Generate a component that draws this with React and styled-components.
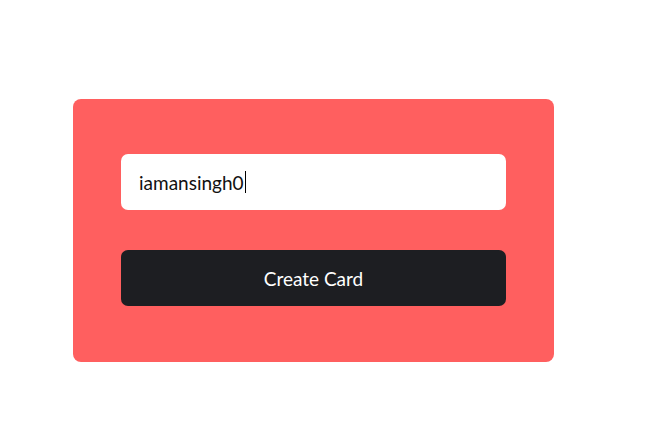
import styled, { createGlobalStyle } from "styled-components";

const GlobalStyle = createGlobalStyle`
  body {
    margin: 0;
    background: #ffffff;
    font-family: Lato, "Liberation Sans", sans-serif;
  }
`;

function App() {
  return (
    <Page>
      <GlobalStyle />
      <Card>
        <Field>
          iamansingh0
          <Caret />
        </Field>
        <CreateButton>Create Card</CreateButton>
      </Card>
    </Page>
  );
}

export default App;

const Page = styled.div`
  padding: 99px 0 0 73px;
  min-height: 421px;
  box-sizing: border-box;
`;

const Card = styled.div`
  display: flex;
  flex-direction: column;
  gap: 40px;
  width: 481px;
  box-sizing: border-box;
  padding: 55px 48px 56px;
  background: #ff5f5f;
  border-radius: 8px;
`;

const Field = styled.div`
  display: flex;
  align-items: center;
  height: 56px;
  box-sizing: border-box;
  padding-left: 18px;
  background: #ffffff;
  border-radius: 7px;
  font-family: Lato, "Liberation Sans", sans-serif;
  font-size: 19px;
  color: #111111;
`;

const Caret = styled.span`
  display: inline-block;
  width: 1px;
  height: 22px;
  margin-left: 1px;
  background: #000000;
`;

const CreateButton = styled.button`
  height: 56px;
  border: none;
  border-radius: 7px;
  background: #1d1e22;
  color: #ffffff;
  font-family: Lato, "Liberation Sans", sans-serif;
  font-size: 19px;
  cursor: pointer;
`;
